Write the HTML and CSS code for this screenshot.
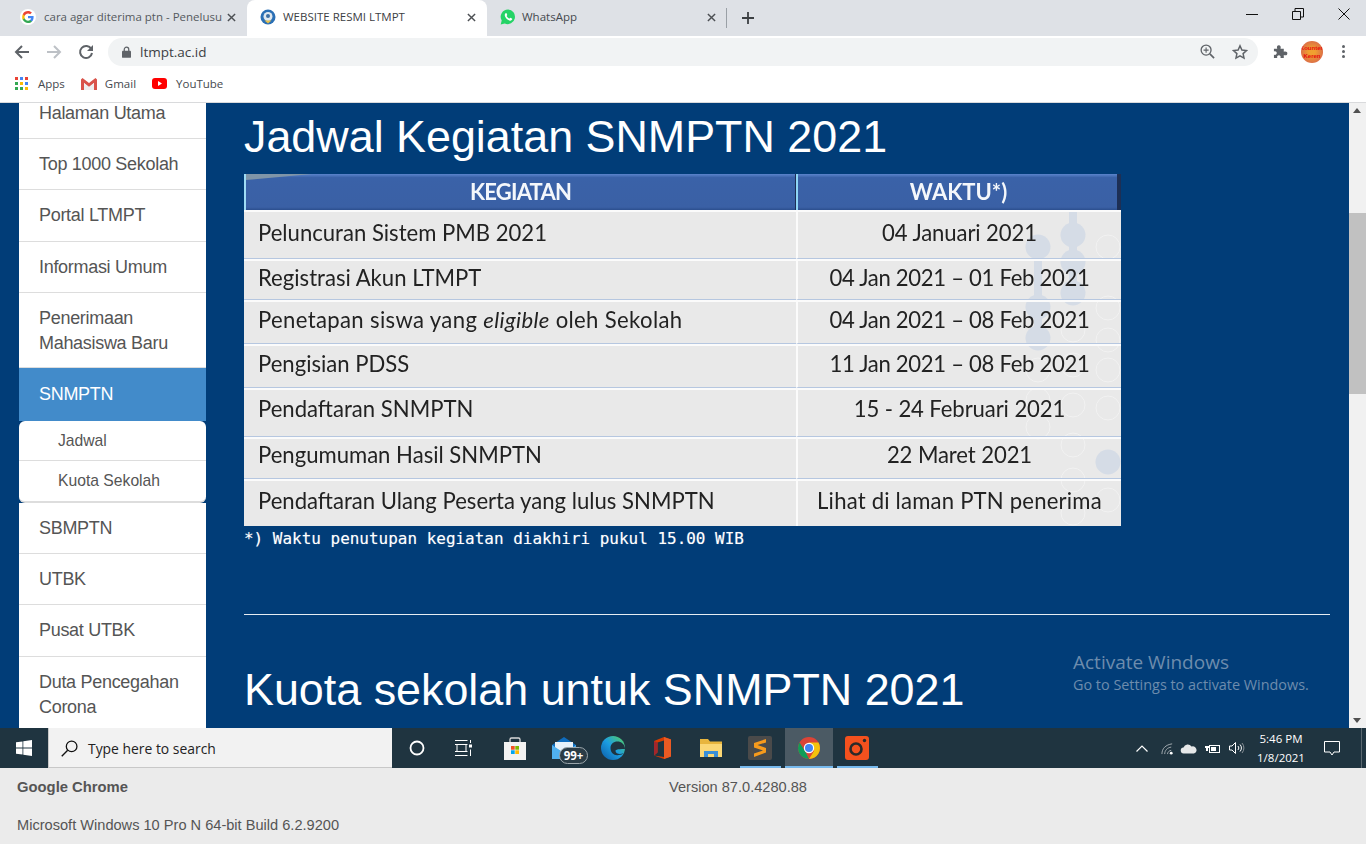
FILE: index.html
```html
<!DOCTYPE html>
<html lang="en">
<head>
  <meta charset="UTF-8">
  <title>WEBSITE RESMI LTMPT</title>
  <link rel="stylesheet" href="styles.css">
</head>
<body>

<div class="tabstrip">
  <div class="tab">
    <svg class="favicon" viewBox="0 0 16 16"><circle cx="8" cy="8" r="8" fill="#fff"/><path d="M13.6 8.2c0-.4 0-.8-.1-1.200H8v2.300h3.200c-.1.8-.6 1.400-1.200 1.800v1.500h1.900c1.100-1 1.700-2.600 1.700-4.400z" fill="#4285f4"/><path d="M8 14c1.600 0 3-.5 3.900-1.500L10 11.100c-.5.400-1.200.6-2 .6-1.500 0-2.800-1-3.300-2.400H2.800v1.500C3.800 12.800 5.700 14 8 14z" fill="#34a853"/><path d="M4.700 9.300c-.3-.8-.3-1.800 0-2.600V5.200H2.800c-.8 1.700-.8 3.900 0 5.600z" fill="#fbbc05"/><path d="M8 4.400c.9 0 1.600.3 2.200.9l1.700-1.700C10.900 2.600 9.600 2 8 2 5.700 2 3.800 3.200 2.800 5.200l1.900 1.500C5.200 5.400 6.500 4.400 8 4.400z" fill="#ea4335"/></svg>
    <span class="tab-title fade">cara agar diterima ptn - Penelusu</span>
    <svg class="tab-close" viewBox="0 0 10 10"><path d="M1 1l8 8M9 1L1 9" stroke="#4c4f53" stroke-width="1.600"/></svg>
  </div>
  <div class="tab tab-active">
    <svg class="favicon" viewBox="0 0 16 16"><circle cx="8" cy="8" r="7.500" fill="#2a6fb5"/><circle cx="8" cy="7.500" r="4.500" fill="#dfe8ef"/><path d="M4.500 11.500h7L8 14.500z" fill="#e8c04a"/><circle cx="8" cy="7" r="2" fill="#3c6ea3"/></svg>
    <span class="tab-title">WEBSITE RESMI LTMPT</span>
    <svg class="tab-close" viewBox="0 0 10 10"><path d="M1 1l8 8M9 1L1 9" stroke="#4c4f53" stroke-width="1.600"/></svg>
  </div>
  <div class="tab tab-wa">
    <svg class="favicon" viewBox="0 0 16 16"><path d="M8 .5a7.300 7.300 0 0 0-6.300 11L.7 15.500l4.100-1A7.300 7.300 0 1 0 8 .5z" fill="#25d366"/><path d="M5.600 4.200c-.9.700-1.100 1.900-.5 3.200.8 1.800 2.300 3.300 4.200 4 1.200.5 2.300.2 2.800-.8.200-.4.200-.8.100-.9l-1.600-.9c-.3-.1-.5.100-.8.500-.2.300-.4.300-.8.200-1-.4-1.800-1.200-2.300-2.200-.1-.3 0-.5.300-.8.200-.2.300-.4.200-.7l-.7-1.600c-.1-.3-.6-.3-.9 0z" fill="#fff"/></svg>
    <span class="tab-title">WhatsApp</span>
    <svg class="tab-close" viewBox="0 0 10 10"><path d="M1 1l8 8M9 1L1 9" stroke="#4c4f53" stroke-width="1.600"/></svg>
  </div>
  <span class="tab-sep"></span>
  <svg class="new-tab" viewBox="0 0 12 12"><path d="M6 0v12M0 6h12" stroke="#3c4043" stroke-width="1.800"/></svg>
  <div class="win-controls">
    <svg viewBox="0 0 12 12"><path d="M0 6.500h12" stroke="#111" stroke-width="1"/></svg>
    <svg viewBox="0 0 12 12"><path d="M.5 3.500h8v8h-8zM3 3.500V.5h8.500v8.500H8.500" fill="none" stroke="#111" stroke-width="1"/></svg>
    <svg viewBox="0 0 12 12"><path d="M.5.500l11 11M11.500.500l-11 11" stroke="#111" stroke-width="1"/></svg>
  </div>
</div>

<div class="toolbar">
  <svg class="tool back" viewBox="0 0 16 16"><path d="M15 8H2M8 2L2 8l6 6" fill="none" stroke="#5f6368" stroke-width="2"/></svg>
  <svg class="tool forward" viewBox="0 0 16 16"><path d="M1 8h13M8 2l6 6-6 6" fill="none" stroke="#bdc1c6" stroke-width="2"/></svg>
  <svg class="tool reload" viewBox="0 0 16 16"><path d="M13.300 5A6 6 0 1 0 14 9" fill="none" stroke="#5f6368" stroke-width="2"/><path d="M15 1v6H9z" fill="#5f6368"/></svg>
  <div class="omnibox">
    <svg class="lock" viewBox="0 0 10 13"><path d="M2.500 6V3.700a2.500 2.500 0 0 1 5 0V6" fill="none" stroke="#5f6368" stroke-width="1.400"/><rect y="5" width="10" height="8" rx="1" fill="#5f6368"/></svg>
    <span class="url">ltmpt.ac.id</span>
    <svg class="omni-icon" viewBox="0 0 16 16"><circle cx="6.500" cy="6.500" r="5.300" fill="none" stroke="#5f6368" stroke-width="1.400"/><path d="M10.500 10.500L15 15" stroke="#5f6368" stroke-width="1.800"/><path d="M6.500 3.800v5.400M3.800 6.500h5.400" stroke="#5f6368" stroke-width="1.200"/></svg>
    <svg class="omni-icon star" viewBox="0 0 16 16"><path d="M8 1.800l1.900 4.200 4.600.5-3.400 3.100.9 4.500L8 11.800l-4 2.300.9-4.500L1.500 6.500l4.600-.5z" fill="none" stroke="#5f6368" stroke-width="1.500"/></svg>
  </div>
  <svg class="puzzle" viewBox="0 0 16 16"><path d="M1 5h3.500c-.8-2.400 0-3.800 1.700-3.800S8.700 2.600 8 5h3.500v3.200c2.300-.7 3.800 0 3.800 1.800s-1.500 2.500-3.800 1.800V15H8c.5-2-.3-3-1.700-3S4 13 4.500 15H1v-3.500c1.800.5 3-.3 3-1.800S2.800 7.300 1 8z" fill="#5f6368"/></svg>
  <div class="avatar"><span>Kounten</span><span>Keren</span></div>
  <div class="kebab"><i></i><i></i><i></i></div>
</div>

<div class="bookmarks">
  <span class="mark">
    <svg class="apps" viewBox="0 0 13 13"><g><rect width="3" height="3" fill="#ea4335"/><rect x="5" width="3" height="3" fill="#4285f4"/><rect x="10" width="3" height="3" fill="#ea4335"/><rect y="5" width="3" height="3" fill="#34a853"/><rect x="5" y="5" width="3" height="3" fill="#fbbc05"/><rect x="10" y="5" width="3" height="3" fill="#4285f4"/><rect y="10" width="3" height="3" fill="#34a853"/><rect x="5" y="10" width="3" height="3" fill="#34a853"/><rect x="10" y="10" width="3" height="3" fill="#fbbc05"/></g></svg>
    Apps
  </span>
  <span class="mark">
    <svg class="gmail" viewBox="0 0 16 12"><path d="M0 1.500V12h3V5l5 4 5-4v7h3V1.500L14.500 0 8 5 1.500 0z" fill="#d9534a"/><path d="M3 5v7h10V5L8 9z" fill="#eee"/></svg>
    Gmail
  </span>
  <span class="mark">
    <svg class="yt" viewBox="0 0 15 11"><rect width="15" height="11" rx="3" fill="#f00"/><path d="M6 3l4 2.500L6 8z" fill="#fff"/></svg>
    YouTube
  </span>
</div>

<div class="viewport">
  <div class="sidebar">
    <a class="item">Halaman Utama</a>
    <a class="item">Top 1000 Sekolah</a>
    <a class="item">Portal LTMPT</a>
    <a class="item">Informasi Umum</a>
    <a class="item item-two">Penerimaan Mahasiswa Baru</a>
    <a class="item item-active">SNMPTN</a>
    <div class="submenu">
      <a class="subitem">Jadwal</a>
      <a class="subitem">Kuota Sekolah</a>
    </div>
    <a class="item">SBMPTN</a>
    <a class="item">UTBK</a>
    <a class="item">Pusat UTBK</a>
    <a class="item item-two">Duta Pencegahan Corona</a>
  </div>

  <div class="content">
    <h1 class="heading">Jadwal Kegiatan SNMPTN 2021</h1>

    <div class="jadwal">
      <svg class="jadwal-bg" viewBox="0 0 325 316">
        <g fill="#d5dce6">
          <rect x="238" y="37" width="8" height="91"/>
          <rect x="273" y="0" width="8" height="83"/>
          <circle cx="242" cy="37" r="12.500"/><circle cx="242" cy="97" r="12.500"/><circle cx="242" cy="128" r="12.500"/>
          <circle cx="277" cy="25" r="12.500"/><circle cx="277" cy="52" r="12.500"/><circle cx="277" cy="83" r="12.500"/>
          <circle cx="312" cy="252" r="12.500"/>
        </g>
        <g fill="none" stroke="#f2f2f2" stroke-width="1">
          <circle cx="312" cy="37" r="12"/><circle cx="312" cy="98" r="12"/><circle cx="312" cy="130" r="12"/>
          <circle cx="312" cy="160" r="12"/><circle cx="312" cy="198" r="12"/><circle cx="312" cy="290" r="12"/>
          <circle cx="277" cy="120" r="12"/><circle cx="277" cy="155" r="12"/><circle cx="277" cy="195" r="12"/>
          <circle cx="277" cy="235" r="12"/><circle cx="277" cy="270" r="12"/><circle cx="277" cy="303" r="12"/>
          <circle cx="242" cy="160" r="12"/><circle cx="242" cy="190" r="12"/><circle cx="242" cy="217" r="12"/>
        </g>
      </svg>
      <div class="th th-left"><span>KEGIATAN</span></div>
      <div class="th th-right"><span>WAKTU*)</span></div>

      <div class="td">Peluncuran Sistem PMB 2021</div>
      <div class="td td-right">04 Januari 2021</div>
      <div class="td">Registrasi Akun LTMPT</div>
      <div class="td td-right td-range">04 Jan 2021 – 01 Feb 2021</div>
      <div class="td td-spaced">Penetapan siswa yang&nbsp;<em>eligible</em>&nbsp;oleh Sekolah</div>
      <div class="td td-right td-range">04 Jan 2021 – 08 Feb 2021</div>
      <div class="td">Pengisian PDSS</div>
      <div class="td td-right td-range">11 Jan 2021 – 08 Feb 2021</div>
      <div class="td td-up">Pendaftaran SNMPTN</div>
      <div class="td td-right td-up">15 - 24 Februari 2021</div>
      <div class="td td-up">Pengumuman Hasil SNMPTN</div>
      <div class="td td-right td-up">22 Maret 2021</div>
      <div class="td td-last">Pendaftaran Ulang Peserta yang lulus SNMPTN</div>
      <div class="td td-right td-last td-wide">Lihat di laman PTN penerima</div>
    </div>

    <p class="note">*) Waktu penutupan kegiatan diakhiri pukul 15.00 WIB</p>
    <hr class="rule">
    <h1 class="heading heading-2">Kuota sekolah untuk SNMPTN 2021</h1>
  </div>

  <div class="scrollbar">
    <span class="arrow arrow-up"></span>
    <span class="thumb"></span>
    <span class="arrow arrow-down"></span>
  </div>

  <div class="watermark">
    <div class="wm-big">Activate Windows</div>
    <div class="wm-small">Go to Settings to activate Windows.</div>
  </div>
</div>

<div class="taskbar">
  <div class="start">
    <svg viewBox="0 0 16 16"><path d="M0 2.300l6.500-.9v6.200H0zM7.300 1.300L16 0v7.600H7.300zM0 8.400h6.500v6.200L0 13.700zM7.300 8.400H16V16l-8.700-1.300z" fill="#fff"/></svg>
  </div>
  <div class="search">
    <svg viewBox="0 0 16 16"><circle cx="10" cy="6" r="5" fill="none" stroke="#111" stroke-width="1.200"/><path d="M6.300 9.700L.7 15.300" stroke="#111" stroke-width="1.300"/></svg>
    <span>Type here to search</span>
  </div>
  <div class="task-btn"><svg class="ico-16" viewBox="0 0 16 16"><circle cx="8" cy="8" r="6.500" fill="none" stroke="#fff" stroke-width="1.800"/></svg></div>
  <div class="task-btn task-view"><svg class="ico-18" viewBox="0 0 17 16"><path d="M0 .5h12.500M0 4.500h12.500M2 4.500v7M11 4.500v7M0 11.500h12.500M0 15.500h12.500M15.500 0v3M15.500 9.500V16" fill="none" stroke="#fff" stroke-width="1"/><rect x="14" y="4.500" width="3" height="3" fill="#fff"/></svg></div>
  <div class="task-btn task-store"><svg class="ico-24" viewBox="0 0 24 24"><path d="M7 6V3.500A1.500 1.500 0 0 1 8.500 2h7A1.500 1.500 0 0 1 17 3.500V6" fill="none" stroke="#d8d8d8" stroke-width="1.300"/><path d="M1 6h22v18H1z" fill="#f2f2f2"/><rect x="8" y="10" width="3.700" height="3.700" fill="#f25022"/><rect x="12.300" y="10" width="3.700" height="3.700" fill="#7fba00"/><rect x="8" y="14.300" width="3.700" height="3.700" fill="#00a4ef"/><rect x="12.300" y="14.300" width="3.700" height="3.700" fill="#ffb900"/></svg></div>
  <div class="task-btn mail">
    <svg class="ico-24" viewBox="0 0 24 24"><path d="M0 9l12-8 12 8v14H0z" fill="#0f6cbd"/><path d="M3 6h18v6l-9 5-9-5z" fill="#e8f2fa"/><path d="M0 9l12 8 12-8v14H0z" fill="#50b0f0"/></svg>
    <span class="badge">99+</span>
  </div>
  <div class="task-btn"><svg class="ico-24" viewBox="0 0 24 24"><defs><linearGradient id="edge" x1="0" y1="1" x2="1" y2="0"><stop offset="0" stop-color="#0c59a4"/><stop offset=".5" stop-color="#1b9de2"/><stop offset="1" stop-color="#5ad35a"/></linearGradient></defs><circle cx="12" cy="12" r="12" fill="url(#edge)"/><path d="M24 13c0-5-4-7.500-7.500-7.500-4 0-7 2.500-7 6.500 0 5 4 8 8 7 3 0 4-1 5-2-3 2-8 1-8-2 0-1 .5-2 9.500-2z" fill="#1f3440"/></svg></div>
  <div class="task-btn"><svg class="ico-24" viewBox="0 0 24 24"><path d="M14 1l7 2.500v17L14 23 4 19.500l10 1.500V4.500L7.500 6.500v10l-3.500 3V5z" fill="#d83b01"/><path d="M14 1l7 2.500v17L14 23z" fill="#eb5a23"/><path d="M4 5l3.500 1.500v10L4 19.500z" fill="#a4262c"/></svg></div>
  <div class="task-btn"><svg class="ico-24" viewBox="0 0 24 24"><path d="M1 3h8l2 2.500h12V21H1z" fill="#e8b53d"/><path d="M1 8h22v13H1z" fill="#fbd775"/><path d="M5 15h14v6h-4v-3H9v3H5z" fill="#3a8fd8"/></svg></div>
  <div class="task-btn run"><svg class="ico-24" viewBox="0 0 24 24"><rect width="24" height="24" rx="2" fill="#4a4a4a"/><path d="M18 4L6 8v4.500l9 3-9 3V22l12-4.500V13l-8.500-3L18 7.500z" fill="#f79a1c" transform="translate(0 -1)"/></svg></div>
  <div class="task-btn run run-on"><svg class="ico-24" viewBox="0 0 24 24"><circle cx="12" cy="12" r="11" fill="#db4437"/><path d="M12 23A11 11 0 0 1 2.500 6.500L8 15z" fill="#0f9d58"/><path d="M12 6.500h9.500A11 11 0 0 1 12 23l5-8z" fill="#f4c20d"/><circle cx="12" cy="12" r="5.200" fill="#fff"/><circle cx="12" cy="12" r="4" fill="#4285f4"/></svg></div>
  <div class="task-btn run"><svg class="ico-24" viewBox="0 0 24 24"><rect width="24" height="24" rx="3" fill="#f4511e"/><circle cx="11" cy="13" r="5.500" fill="none" stroke="#2a2a2a" stroke-width="2.600"/><circle cx="19.500" cy="4.500" r="1.700" fill="#2a2a2a"/></svg></div>

  <div class="tray">
    <svg class="tray-up" viewBox="0 0 12 7"><path d="M.5 6.500L6 1l5.500 5.500" fill="none" stroke="#fff" stroke-width="1.200"/></svg>
    <svg class="tray-wifi" viewBox="0 0 14 14"><path d="M1 13C1 7 5 3 12 2M4 13c0-4 3-7 7-7.500M7 13c0-2 2-4 4-4" fill="none" stroke="#a9b0b5" stroke-width="1"/><circle cx="11" cy="12" r="1.500" fill="#fff"/></svg>
    <svg class="tray-cloud" viewBox="0 0 17 10"><path d="M4 10a3 3 0 0 1-.5-6A4.500 4.500 0 0 1 11.500 3 3.500 3.500 0 0 1 14 10z" fill="#e6e8e9"/></svg>
    <svg class="tray-batt" viewBox="0 0 16 12"><rect x="4.500" y="3.500" width="10" height="7" fill="none" stroke="#fff"/><rect x="6" y="5" width="5" height="4" fill="#fff"/><path d="M1 1v3M3 1v3M0 4h4v2H3v3H1V6H0z" fill="#fff"/></svg>
    <svg class="tray-vol" viewBox="0 0 16 12"><path d="M.5 4h2.500L6.500.5v11L3 8H.5z" fill="none" stroke="#fff"/><path d="M9 4a3 3 0 0 1 0 4M11 2.500a5 5 0 0 1 0 7" fill="none" stroke="#fff"/><path d="M13 1a7.500 7.500 0 0 1 0 10" fill="none" stroke="#8a9298"/></svg>
    <div class="clock"><span>5:46 PM</span><span>1/8/2021</span></div>
    <svg class="tray-note" viewBox="0 0 16 15"><path d="M.5.500h15v10.500H10L8 14l-2-3H.5z" fill="none" stroke="#fff"/></svg>
    <span class="show-desktop"></span>
  </div>
</div>

<div class="about">
  <div class="about-row">
    <strong class="about-name">Google Chrome</strong>
    <span class="about-version">Version 87.0.4280.88</span>
  </div>
  <div class="about-os">Microsoft Windows 10 Pro N 64-bit Build 6.2.9200</div>
</div>

</body>
</html>
```

FILE: styles.css
```css
* { box-sizing: border-box; }
html, body { margin: 0; height: 844px; overflow: hidden; }
body { display: flex; flex-direction: column; width: 1366px; font-family: "Liberation Sans", Arial, sans-serif; background: #ebebeb; }

/* tab strip */
.tabstrip { display: flex; align-items: center; height: 36px; flex: none; background: #dee1e6; padding-left: 7px; font-family: "Open Sans", sans-serif; }
.tab { display: flex; align-items: center; width: 240px; height: 36px; padding: 0 10px 3px 13px; color: #45494e; }
.tab-active { background: #fff; border-radius: 8px 8px 0 0; color: #3c4043; }
.favicon { width: 16px; height: 16px; flex: none; margin-right: 7px; margin-top: 1px; }
.tab-wa .favicon { margin-right: 6px; }
.tab-title { flex: 1; font-size: 11.5px; white-space: nowrap; min-width: 0; }
.fade { color: #55595e; margin-left: 1px; }
.tab-close { width: 9px; height: 9px; flex: none; margin-left: 8px; margin-top: 2px; margin-right: 1px; }
.tab-sep { width: 1px; height: 20px; background: #9aa0a6; margin-left: -1px; }
.new-tab { width: 12px; height: 12px; margin-left: 15px; }
.win-controls { display: flex; align-items: center; margin-left: auto; padding-right: 16px; gap: 34px; margin-top: -8px; }
.win-controls svg { width: 12px; height: 12px; }

/* toolbar */
.toolbar { display: flex; align-items: center; height: 31px; flex: none; background: #fff; }
.tool { width: 16px; height: 16px; flex: none; }
.back { margin-left: 14px; }
.forward { margin-left: 16px; }
.reload { margin-left: 16px; }
.omnibox { display: flex; align-items: center; width: 1150px; height: 28px; margin-left: 14px; background: #f1f3f4; border-radius: 14px; padding: 0 10px 0 14px; }
.lock { width: 9px; height: 12px; flex: none; }
.url { flex: 1; font-family: "Open Sans", sans-serif; font-size: 13.5px; color: #3c4043; margin-left: 9px; }
.omni-icon { width: 15px; height: 15px; flex: none; }
.star { margin-left: 17px; width: 16px; height: 16px; }
.puzzle { width: 15px; height: 15px; margin-left: 15px; flex: none; }
.avatar { width: 22px; height: 22px; border-radius: 50%; background: radial-gradient(circle, #f0a030 20%, #d9684a 80%); margin-left: 13px; display: flex; flex-direction: column; align-items: center; justify-content: center; color: #e80c0c; font-size: 6px; line-height: 8px; font-weight: bold; flex: none; overflow: hidden; }
.kebab { display: flex; flex-direction: column; gap: 2px; margin-left: 19px; }
.kebab i { display: block; width: 3px; height: 3px; border-radius: 50%; background: #5f6368; }

/* bookmarks */
.bookmarks { display: flex; align-items: center; height: 36px; flex: none; background: #fff; border-bottom: 1px solid #d9dadc; padding: 0 0 2px 15px; font-family: "Open Sans", sans-serif; font-size: 11.5px; color: #45494e; }
.mark { display: flex; align-items: center; margin-right: 16px; }
.apps { width: 13px; height: 13px; margin-right: 10px; }
.gmail { width: 16px; height: 12px; margin-right: 8px; }
.yt { width: 15px; height: 11px; margin-right: 9px; }

/* page */
.viewport { position: relative; display: flex; height: 625px; flex: none; background: #013d78; overflow: hidden; }
.sidebar { width: 187px; flex: none; margin: -15.33px 0 0 19px; font-size: 18px; line-height: 25.33px; color: #555; align-self: flex-start; letter-spacing: -0.3px; }
.item { display: block; padding: 13px 20px 12px; background: #fff; border-bottom: 1px solid #ddd; }
.item-two { height: 75.17px; line-height: 25px; }
.item-active { background: #428bca; color: #fff; border-bottom: 0; height: 53px; padding-top: 14px; }
.submenu { height: 81.5px; background: #fff; border-radius: 6px; border-bottom: 2px solid #ddd; }
.subitem { display: block; height: 40px; padding: 7px 0 0 39px; font-size: 15.7px; letter-spacing: 0; border-bottom: 1px solid #ddd; }
.subitem:last-child { border-bottom: 0; height: 39px; }

.content { flex: 1; padding-left: 38px; padding-right: 19px; color: #fff; }
.heading { margin: 3px 0 0; font-size: 44.85px; line-height: 62px; font-weight: normal; white-space: nowrap; }
.heading-2 { margin-top: 44px; }

.jadwal { position: relative; display: grid; grid-template-columns: 552px 325px; grid-template-rows: 36px 49px 41px 44px 44px 49px 42px 47px; width: 877px; margin-top: 6px; background: #e9e9e9; font-family: Lato, sans-serif; font-size: 22.1px; color: #222; filter: blur(0.35px); }
.jadwal-bg { position: absolute; right: 0; top: 36px; width: 325px; height: 316px; }
.th { position: relative; display: flex; align-items: center; justify-content: center; background: linear-gradient(#5a84cc, #3a62a8 10%, #3a60a5 92%, #2c4f8e); color: #f4f7fb; font-weight: bold; font-size: 22px; padding-bottom: 2px; }
.th-left { letter-spacing: -0.8px; box-shadow: inset 2px 0 0 #9fdcf5; }
.th-left::before { content: ""; position: absolute; left: 2px; top: 0; width: 66px; height: 6px; background: #7f95a8; clip-path: polygon(0 0, 100% 0, 0 100%); }
.th-left span { margin-left: 1px; }
.th-right { box-shadow: inset 2px 0 0 #8fd6f5, inset -4px 0 0 #1d2f55; border-left: 1px solid #1d2f55; margin-left: -1px; }
.td { position: relative; display: flex; align-items: center; padding: 0 0 6px 14px; border-bottom: 1px solid #b6c7e0; border-top: 2px solid #fbfbfb; white-space: nowrap; }
.td em { font-style: italic; }
.td-right { justify-content: center; padding-left: 0; border-left: 2px solid #fbfbfb; letter-spacing: -0.1px; }
.td-range { letter-spacing: -0.3px; }
.td-spaced { letter-spacing: 0.35px; }
.td-up { padding-bottom: 9px; }
.td-wide { letter-spacing: 0.2px; }
.td-last { border-bottom: 0; }
.note { margin: 3px 0 0; font-family: "DejaVu Sans Mono", monospace; font-size: 15.98px; line-height: 20px; text-shadow: 0 0 1px rgba(255, 255, 255, .4); }
.rule { margin: 65px 0 0; height: 1px; border: 0; background: #e6ecf2; }

.scrollbar { position: relative; width: 17px; flex: none; background: #f1f1f1; }
.arrow { position: absolute; left: 4px; width: 0; height: 0; border-left: 4px solid transparent; border-right: 4px solid transparent; }
.arrow-up { top: 5px; border-bottom: 5px solid #505050; }
.arrow-down { bottom: 5px; border-top: 5px solid #505050; }
.thumb { position: absolute; left: 0; right: 0; top: 110px; height: 181px; background: #c1c1c1; }

.watermark { position: absolute; left: 1073px; top: 547px; font-family: "Open Sans", sans-serif; color: #6d8cad; }
.wm-big { font-size: 19px; line-height: 25px; }
.wm-small { font-size: 14.4px; line-height: 20px; }

/* taskbar */
.taskbar { display: flex; height: 40px; flex: none; background: #1f3440; color: #fff; }
.start { display: flex; align-items: center; justify-content: center; width: 48px; flex: none; }
.start svg { width: 16px; height: 16px; }
.search { display: flex; align-items: center; width: 344px; flex: none; background: #f2f2f2; border: 1px solid #c8c8c8; border-right: 0; border-top: 0; padding: 1px 0 0 12px; color: #222; font-family: "Open Sans", sans-serif; font-size: 13.9px; }
.search svg { width: 17px; height: 17px; margin-right: 10px; }
.task-btn { position: relative; display: flex; align-items: center; justify-content: center; width: 49px; flex: none; }
.task-view { width: 48px; }
.task-store { margin-left: 2px; }
.task-view svg { margin-right: 3px; }
.ico-16 { width: 16px; height: 16px; }
.ico-18 { width: 17px; height: 16px; }
.ico-24 { width: 24px; height: 24px; margin-right: 1px; }
.badge { position: absolute; left: 19px; top: 19px; width: 29px; height: 17px; border: 1px solid #9aa5ab; border-radius: 9px; background: #2b3c46; font-family: "Open Sans", sans-serif; font-size: 11.5px; font-weight: bold; line-height: 15px; text-align: center; }
.run::after { content: ""; position: absolute; left: 4px; right: 4px; bottom: 0; height: 2px; background: #76b9ed; }
.run-on { width: 48px; background: #4b5a64; }
.run-on .ico-24 { margin-right: 0; }
.run-on::after { left: 0; right: 0; }
.tray { display: flex; align-items: center; margin-left: auto; position: relative; }
.tray-up { width: 12px; height: 7px; margin-right: 13px; }
.tray-wifi { width: 13px; height: 13px; margin-right: 6px; }
.tray-cloud { width: 17px; height: 11px; margin-right: 8px; }
.tray-batt { width: 16px; height: 12px; margin-right: 8px; }
.tray-vol { width: 16px; height: 12px; margin-right: 6px; }
.clock { display: flex; flex-direction: column; align-items: center; width: 60px; font-family: "Open Sans", sans-serif; font-size: 11.5px; line-height: 19px; }
.tray-note { width: 16px; height: 15px; margin-left: 13px; margin-right: 26px; }
.show-desktop { position: absolute; right: 4px; top: 0; bottom: 0; width: 1px; background: #5a6870; }

/* about chrome strip */
.about { flex: 1; background: #ebebeb; color: #555; font-size: 14.6px; line-height: 20px; padding: 9px 0 0 17px; }
.about-row { position: relative; }
.about-version { position: absolute; left: 652px; top: 0; }
.about-name { font-weight: bold; font-size: 14.8px; }
.about-os { margin-top: 18px; }
```
